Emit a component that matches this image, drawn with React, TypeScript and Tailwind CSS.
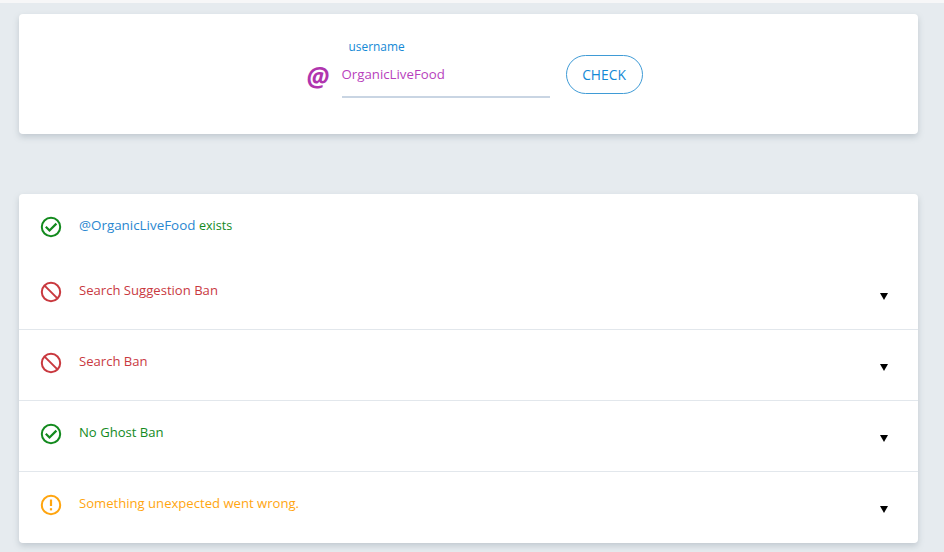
const font = "[font-family:'Open_Sans',sans-serif]";

function StatusIcon({ kind }: { kind: 'ok' | 'ban' | 'warn' }) {
  if (kind === 'ok') {
    return (
      <svg width="22" height="22" viewBox="0 0 22 22" fill="none" stroke="#138a1e" strokeWidth="2">
        <circle cx="11" cy="11" r="9.2" />
        <path d="M5.8 10.8l3.7 3.7 6.9-6.9" strokeWidth="2.2" />
      </svg>
    );
  }
  if (kind === 'ban') {
    return (
      <svg width="22" height="22" viewBox="0 0 22 22" fill="none" stroke="#c9393f" strokeWidth="2">
        <circle cx="11" cy="11" r="9.2" />
        <path d="M4.6 4.6l12.8 12.8" />
      </svg>
    );
  }
  return (
    <svg width="22" height="22" viewBox="0 0 22 22" fill="none" stroke="#ffa50f" strokeWidth="2">
      <circle cx="11" cy="11" r="9.2" />
      <path d="M11 5.5v6.5" strokeWidth="2.2" />
      <path d="M11 14.2v2.2" strokeWidth="2.2" />
    </svg>
  );
}

function Row({ kind, text, color }: { kind: 'ok' | 'ban' | 'warn'; text: string; color: string }) {
  return (
    <div className="relative flex h-[71px] items-start border-b border-[#e2e7ec] pl-[21px] pt-[22px] last:border-b-0">
      <StatusIcon kind={kind} />
      <span className={`ml-[17px] -mt-px text-[13.1px] leading-[20px] ${color}`}>{text}</span>
      <span className="absolute right-[30px] top-[34px] h-0 w-0 border-x-[4px] border-t-[7px] border-x-transparent border-t-black" />
    </div>
  );
}

export default function App() {
  return (
    <div className={`h-[552px] overflow-hidden bg-[#e6ebef] ${font}`}>
      <div className="h-[3px] bg-[#f7f7f8]" />
      <div className="px-[19px] pr-[26px] pt-[11px]">
        <div className="flex h-[120px] justify-center rounded-[4px] bg-white pl-[12px] pt-[24px] shadow-[0_3px_6px_rgba(100,115,130,0.28)]">
          <div className="flex items-start">
            <span className="mt-[22px] w-[35px] text-[26px] font-bold italic leading-[32px] text-[#b035ae]">@</span>
            <div className="w-[208px]">
              <div className="pl-[7px] text-[11.9px] leading-[17px] text-[#1489d6]">username</div>
              <div className="h-[43px] border-b-2 border-[#c9d5e3] pt-[9px] text-[13.25px] leading-[20px] text-[#b83fbd]">OrganicLiveFood</div>
            </div>
            <button className="ml-[16px] mt-[17px] h-[39px] w-[77px] rounded-[20px] border border-[#3f9bd6] pt-px text-[13.8px] text-[#1489d6]">
              CHECK
            </button>
          </div>
        </div>

        <div className="mt-[60px] rounded-[4px] bg-white shadow-[0_3px_6px_rgba(100,115,130,0.28)]">
          <div className="flex h-[65px] items-start pl-[21px] pt-[22px]">
            <StatusIcon kind="ok" />
            <span className="ml-[17px] -mt-px text-[13.4px] leading-[20px]">
              <span className="text-[#2a87d0]">@OrganicLiveFood</span>{' '}
              <span className="text-[12.6px] text-[#138a1e]">exists</span>
            </span>
          </div>
          <Row kind="ban" text="Search Suggestion Ban" color="text-[#c9393f]" />
          <Row kind="ban" text="Search Ban" color="text-[#c9393f]" />
          <Row kind="ok" text="No Ghost Ban" color="text-[#138a1e]" />
          <Row kind="warn" text="Something unexpected went wrong." color="text-[#ffa50f]" />
        </div>
      </div>
    </div>
  );
}
